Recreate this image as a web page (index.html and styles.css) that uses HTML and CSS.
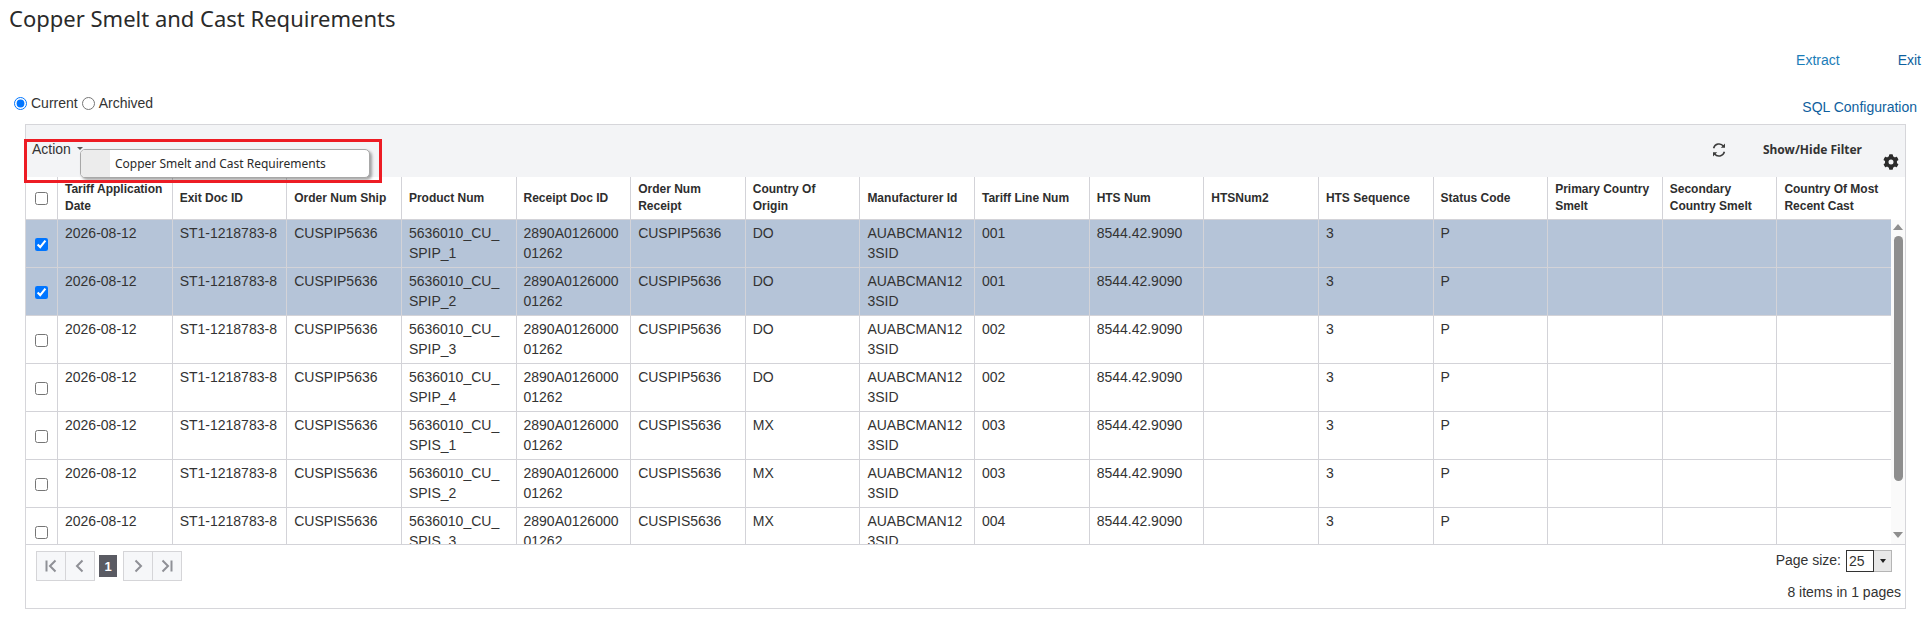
FILE: index.html
```html
<!DOCTYPE html>
<html lang="en">
<head>
<meta charset="utf-8">
<title>Copper Smelt and Cast Requirements</title>
<link rel="stylesheet" href="styles.css">
</head>
<body>
<h1 class="title">Copper Smelt and Cast Requirements</h1>
<div class="top-links">
  <a class="link extract" href="#">Extract</a>
  <a class="link exit" href="#">Exit</a>
</div>
<div class="mode-row">
  <div class="mode">
    <label class="mode-item"><input class="radio" type="radio" name="mode" checked> Current</label>
    <label class="mode-item"><input class="radio" type="radio" name="mode"> Archived</label>
  </div>
  <a class="link sql" href="#">SQL Configuration</a>
</div>
<section class="panel">
  <div class="toolbar">
    <div class="action">Action <span class="caret"></span></div>
    <svg class="refresh" viewBox="0 0 16 16" width="16" height="16"><path d="M2.6 6.2A5.6 5.6 0 0 1 12.5 4.2M13.4 9.8A5.6 5.6 0 0 1 3.5 11.8" fill="none" stroke="#3c3c3c" stroke-width="1.5"/><path d="M14 1.6v4.2H9.8zM2 14.4v-4.2h4.2z" fill="#3c3c3c"/></svg>
    <span class="filter">Show/Hide Filter</span>
    <svg class="gear" viewBox="0 0 512 512" width="16" height="16"><path fill="#2b2b2b" d="M487 316l-42-24a190 190 0 0 0 0-72l42-24c5-3 7-8 5-14-11-35-30-67-54-93-4-4-10-5-15-2l-42 24a188 188 0 0 0-62-36V26c0-6-4-11-9-12-36-8-73-8-108 0-6 1-10 6-10 12v49a194 194 0 0 0-62 36L88 87c-5-3-11-2-15 2-24 26-43 58-54 93-2 6 0 11 5 14l42 24a190 190 0 0 0 0 72l-42 24c-5 3-7 8-5 14 11 35 30 67 54 93 4 4 10 5 15 2l42-24a188 188 0 0 0 62 36v49c0 6 4 11 10 12 36 8 73 8 108 0 5-1 9-6 9-12v-49a194 194 0 0 0 62-36l42 24c5 3 11 2 15-2 24-26 43-58 54-93 2-6 0-11-5-14zM256 336a80 80 0 1 1 0-160 80 80 0 0 1 0 160z"/></svg>
  </div>
  <div class="menu"><span class="menu-icon"></span><span class="menu-text">Copper Smelt and Cast Requirements</span></div>
  <div class="highlight"></div>
  <table class="grid head">
    <colgroup><col class="col-check"></colgroup>
    <thead>
      <tr>
        <th class="check"><input type="checkbox"></th>
        <th>Tariff Application Date</th><th>Exit Doc ID</th><th>Order Num Ship</th><th>Product Num</th>
        <th>Receipt Doc ID</th><th>Order Num Receipt</th><th>Country Of Origin</th><th>Manufacturer Id</th>
        <th>Tariff Line Num</th><th>HTS Num</th><th>HTSNum2</th><th>HTS Sequence</th><th>Status Code</th>
        <th>Primary Country Smelt</th><th>Secondary Country Smelt</th><th>Country Of Most Recent Cast</th>
      </tr>
    </thead>
  </table>
  <div class="body-wrap">
    <div class="scroller">
      <table class="grid rows">
        <colgroup><col class="col-check"></colgroup>
        <tbody>
          <tr class="selected"><td class="check"><input type="checkbox" checked></td><td>2026-08-12</td><td>ST1-1218783-8</td><td>CUSPIP5636</td><td>5636010_CU_SPIP_1</td><td>2890A012600001262</td><td>CUSPIP5636</td><td>DO</td><td>AUABCMAN123SID</td><td>001</td><td>8544.42.9090</td><td></td><td>3</td><td>P</td><td></td><td></td><td></td></tr>
          <tr class="selected"><td class="check"><input type="checkbox" checked></td><td>2026-08-12</td><td>ST1-1218783-8</td><td>CUSPIP5636</td><td>5636010_CU_SPIP_2</td><td>2890A012600001262</td><td>CUSPIP5636</td><td>DO</td><td>AUABCMAN123SID</td><td>001</td><td>8544.42.9090</td><td></td><td>3</td><td>P</td><td></td><td></td><td></td></tr>
          <tr><td class="check"><input type="checkbox"></td><td>2026-08-12</td><td>ST1-1218783-8</td><td>CUSPIP5636</td><td>5636010_CU_SPIP_3</td><td>2890A012600001262</td><td>CUSPIP5636</td><td>DO</td><td>AUABCMAN123SID</td><td>002</td><td>8544.42.9090</td><td></td><td>3</td><td>P</td><td></td><td></td><td></td></tr>
          <tr><td class="check"><input type="checkbox"></td><td>2026-08-12</td><td>ST1-1218783-8</td><td>CUSPIP5636</td><td>5636010_CU_SPIP_4</td><td>2890A012600001262</td><td>CUSPIP5636</td><td>DO</td><td>AUABCMAN123SID</td><td>002</td><td>8544.42.9090</td><td></td><td>3</td><td>P</td><td></td><td></td><td></td></tr>
          <tr><td class="check"><input type="checkbox"></td><td>2026-08-12</td><td>ST1-1218783-8</td><td>CUSPIS5636</td><td>5636010_CU_SPIS_1</td><td>2890A012600001262</td><td>CUSPIS5636</td><td>MX</td><td>AUABCMAN123SID</td><td>003</td><td>8544.42.9090</td><td></td><td>3</td><td>P</td><td></td><td></td><td></td></tr>
          <tr><td class="check"><input type="checkbox"></td><td>2026-08-12</td><td>ST1-1218783-8</td><td>CUSPIS5636</td><td>5636010_CU_SPIS_2</td><td>2890A012600001262</td><td>CUSPIS5636</td><td>MX</td><td>AUABCMAN123SID</td><td>003</td><td>8544.42.9090</td><td></td><td>3</td><td>P</td><td></td><td></td><td></td></tr>
          <tr><td class="check"><input type="checkbox"></td><td>2026-08-12</td><td>ST1-1218783-8</td><td>CUSPIS5636</td><td>5636010_CU_SPIS_3</td><td>2890A012600001262</td><td>CUSPIS5636</td><td>MX</td><td>AUABCMAN123SID</td><td>004</td><td>8544.42.9090</td><td></td><td>3</td><td>P</td><td></td><td></td><td></td></tr>
        </tbody>
      </table>
    </div>
    <div class="scrollbar">
      <span class="arrow-up"></span>
      <span class="thumb"></span>
      <span class="arrow-down"></span>
    </div>
  </div>
  <div class="footer">
    <div class="pager">
      <div class="pager-group">
        <button class="pg-btn" type="button"><svg viewBox="0 0 12 14" width="12" height="14"><path d="M1.5 1.5v11" stroke="#8f9096" stroke-width="2" fill="none"/><path d="M10.5 1.5L5 7l5.5 5.5" stroke="#8f9096" stroke-width="2" fill="none"/></svg></button>
        <button class="pg-btn" type="button"><svg viewBox="0 0 12 14" width="12" height="14"><path d="M8.5 1.5L3 7l5.5 5.5" stroke="#8f9096" stroke-width="2" fill="none"/></svg></button>
      </div>
      <span class="pg-current">1</span>
      <div class="pager-group">
        <button class="pg-btn" type="button"><svg viewBox="0 0 12 14" width="12" height="14"><path d="M3.5 1.5L9 7l-5.5 5.5" stroke="#8f9096" stroke-width="2" fill="none"/></svg></button>
        <button class="pg-btn" type="button"><svg viewBox="0 0 12 14" width="12" height="14"><path d="M1.5 1.5L7 7l-5.5 5.5" stroke="#8f9096" stroke-width="2" fill="none"/><path d="M10.5 1.5v11" stroke="#8f9096" stroke-width="2" fill="none"/></svg></button>
      </div>
    </div>
    <div class="pageinfo">
      <div class="pagesize">
        <span>Page size:</span>
        <span class="combo"><span class="combo-val">25</span><span class="combo-btn"></span></span>
      </div>
      <div class="items">8 items in 1 pages</div>
    </div>
  </div>
</section>
</body>
</html>
```
FILE: styles.css
```css
* { box-sizing: border-box; }
html, body { margin: 0; padding: 0; }
body {
  width: 1932px;
  height: 631px;
  overflow: hidden;
  background: #fff;
  font-family: "Liberation Sans", Arial, sans-serif;
  font-size: 14px;
  color: #333;
}
.title {
  margin: 0;
  padding: 3px 0 0 9px;
  height: 51px;
  font-family: "Noto Sans", sans-serif;
  font-size: 22px;
  line-height: 30px;
  font-weight: 400;
  color: #2a2a2a;
}
.link { text-decoration: none; font-size: 14px; line-height: 16px; }
.top-links {
  display: flex;
  justify-content: flex-end;
  height: 42px;
  padding-top: 1px;
  padding-right: 11px;
}
.extract { color: #1a7db8; margin-right: 58px; }
.exit { color: #0f5f9e; }
.mode-row {
  display: flex;
  justify-content: space-between;
  height: 31px;
  padding: 2px 15px 0 14px;
}
.mode { display: flex; gap: 4px; line-height: 16px; color: #333; }
.mode-item { display: flex; align-items: center; gap: 4px; height: 16px; }
.radio { margin: 0; width: 13px; height: 13px; }
.sql { color: #0f5f9e; padding-top: 4px; line-height: 16px; }
.panel {
  position: relative;
  margin-left: 25px;
  width: 1881px;
  height: 485px;
  border: 1px solid #d6d6da;
  background: #fff;
}
.toolbar {
  display: flex;
  align-items: center;
  height: 52px;
  padding: 0 6px 0 6px;
  background: #f3f4f6;
}
.action { flex: 1; font-size: 14px; color: #333; margin-top: -4px; }
.caret {
  display: inline-block;
  width: 0; height: 0;
  margin-left: 2px;
  vertical-align: middle;
  border: 3px solid transparent;
  border-top-color: #555;
}
.refresh { margin-right: 36px; margin-top: -3px; }
.filter {
  font-family: "Noto Sans", sans-serif;
  font-size: 12px;
  font-weight: 700;
  color: #333;
  margin-right: 21px;
  margin-top: -3px;
}
.gear { align-self: flex-end; margin-bottom: 7px; }
.menu {
  position: absolute;
  left: 54px;
  top: 24px;
  display: flex;
  align-items: center;
  width: 290px;
  height: 29px;
  background: #fff;
  border: 1px solid #a8a8a8;
  border-radius: 5px;
  box-shadow: 2px 2px 3px rgba(0,0,0,.35);
  overflow: hidden;
  z-index: 2;
}
.menu-icon { width: 29px; height: 100%; background: #ececec; }
.menu-text {
  padding-left: 5px;
  font-family: "Noto Sans", sans-serif;
  font-size: 12px;
  color: #2a2a2a;
}
.highlight {
  position: absolute;
  left: -2px;
  top: 14px;
  width: 358px;
  height: 44px;
  border: 3px solid #ed1c24;
  z-index: 3;
}
.grid {
  border-collapse: separate;
  border-spacing: 0;
  table-layout: fixed;
  width: 1865px;
}
.col-check { width: 31px; }
.grid th, .grid td {
  border-left: 1px solid #d3d3d8;
  border-bottom: 1px solid #d3d3d8;
}
.grid th:first-child, .grid td:first-child { border-left: 0; }
.grid th {
  height: 43px;
  padding: 0 8px 0 7px;
  text-align: left;
  font-size: 12px;
  line-height: 17px;
  font-weight: 700;
  color: #2e2e2e;
  vertical-align: middle;
}
.head { background: #fff; }
.grid td {
  height: 48px;
  padding: 3px 9px 0 7px;
  vertical-align: top;
  font-size: 14px;
  line-height: 20px;
  color: #333;
  word-break: break-all;
}
.grid .check { padding: 0; text-align: center; vertical-align: middle; }
.grid td.check { padding: 0; }
.grid input { margin: 0; width: 13px; height: 13px; vertical-align: middle; }
.selected td { background: #b5c4d8; }
.body-wrap {
  display: flex;
  height: 325px;
  border-bottom: 1px solid #d3d3d8;
  margin-top: 0;
}
.scroller { width: 1865px; height: 324px; overflow: hidden; }
.scrollbar {
  position: relative;
  flex: 1;
  display: flex;
  flex-direction: column;
  align-items: center;
  background: #fafafa;
  padding-top: 4px;
}
.arrow-up {
  width: 0; height: 0;
  border-left: 5px solid transparent;
  border-right: 5px solid transparent;
  border-bottom: 6px solid #8e8e8e;
}
.thumb {
  width: 9px;
  height: 245px;
  margin-top: 6px;
  border-radius: 5px;
  background: #8e8e8e;
}
.arrow-down {
  width: 0; height: 0;
  margin-top: 51px;
  border-left: 5px solid transparent;
  border-right: 5px solid transparent;
  border-top: 6px solid #8e8e8e;
}
.footer {
  display: flex;
  justify-content: space-between;
  padding: 5px 9px 0 10px;
}
.pager { display: flex; align-items: center; height: 31px; }
.pager-group { display: flex; }
.pg-btn {
  display: flex;
  align-items: center;
  justify-content: center;
  width: 30px;
  height: 30px;
  padding: 0;
  margin: 0 -1px 0 0;
  background: #f6f7f9;
  border: 1px solid #d5d5d8;
}
.pg-current {
  width: 18px;
  height: 22px;
  margin: 0 6px 0 5px;
  background: #5a5b63;
  color: #fff;
  font-size: 13px;
  font-weight: 700;
  line-height: 24px;
  text-align: center;
}
.pageinfo { display: flex; flex-direction: column; align-items: flex-end; }
.pagesize { display: flex; align-items: flex-start; gap: 5px; line-height: 20px; margin-right: 4px; }
.combo { display: flex; width: 46px; height: 22px; }
.combo-val {
  width: 28px;
  border: 1px solid #333;
  padding-left: 2px;
  line-height: 20px;
  background: #fff;
}
.combo-btn {
  position: relative;
  flex: 1;
  border: 1px solid #b5b5b5;
  border-left: 0;
  background: #e8e8e8;
}
.combo-btn::after {
  content: "";
  position: absolute;
  left: 6px;
  top: 8px;
  border: 3px solid transparent;
  border-top: 4px solid #222;
}
.items { margin-top: 12px; line-height: 16px; margin-right: -5px; }
```
